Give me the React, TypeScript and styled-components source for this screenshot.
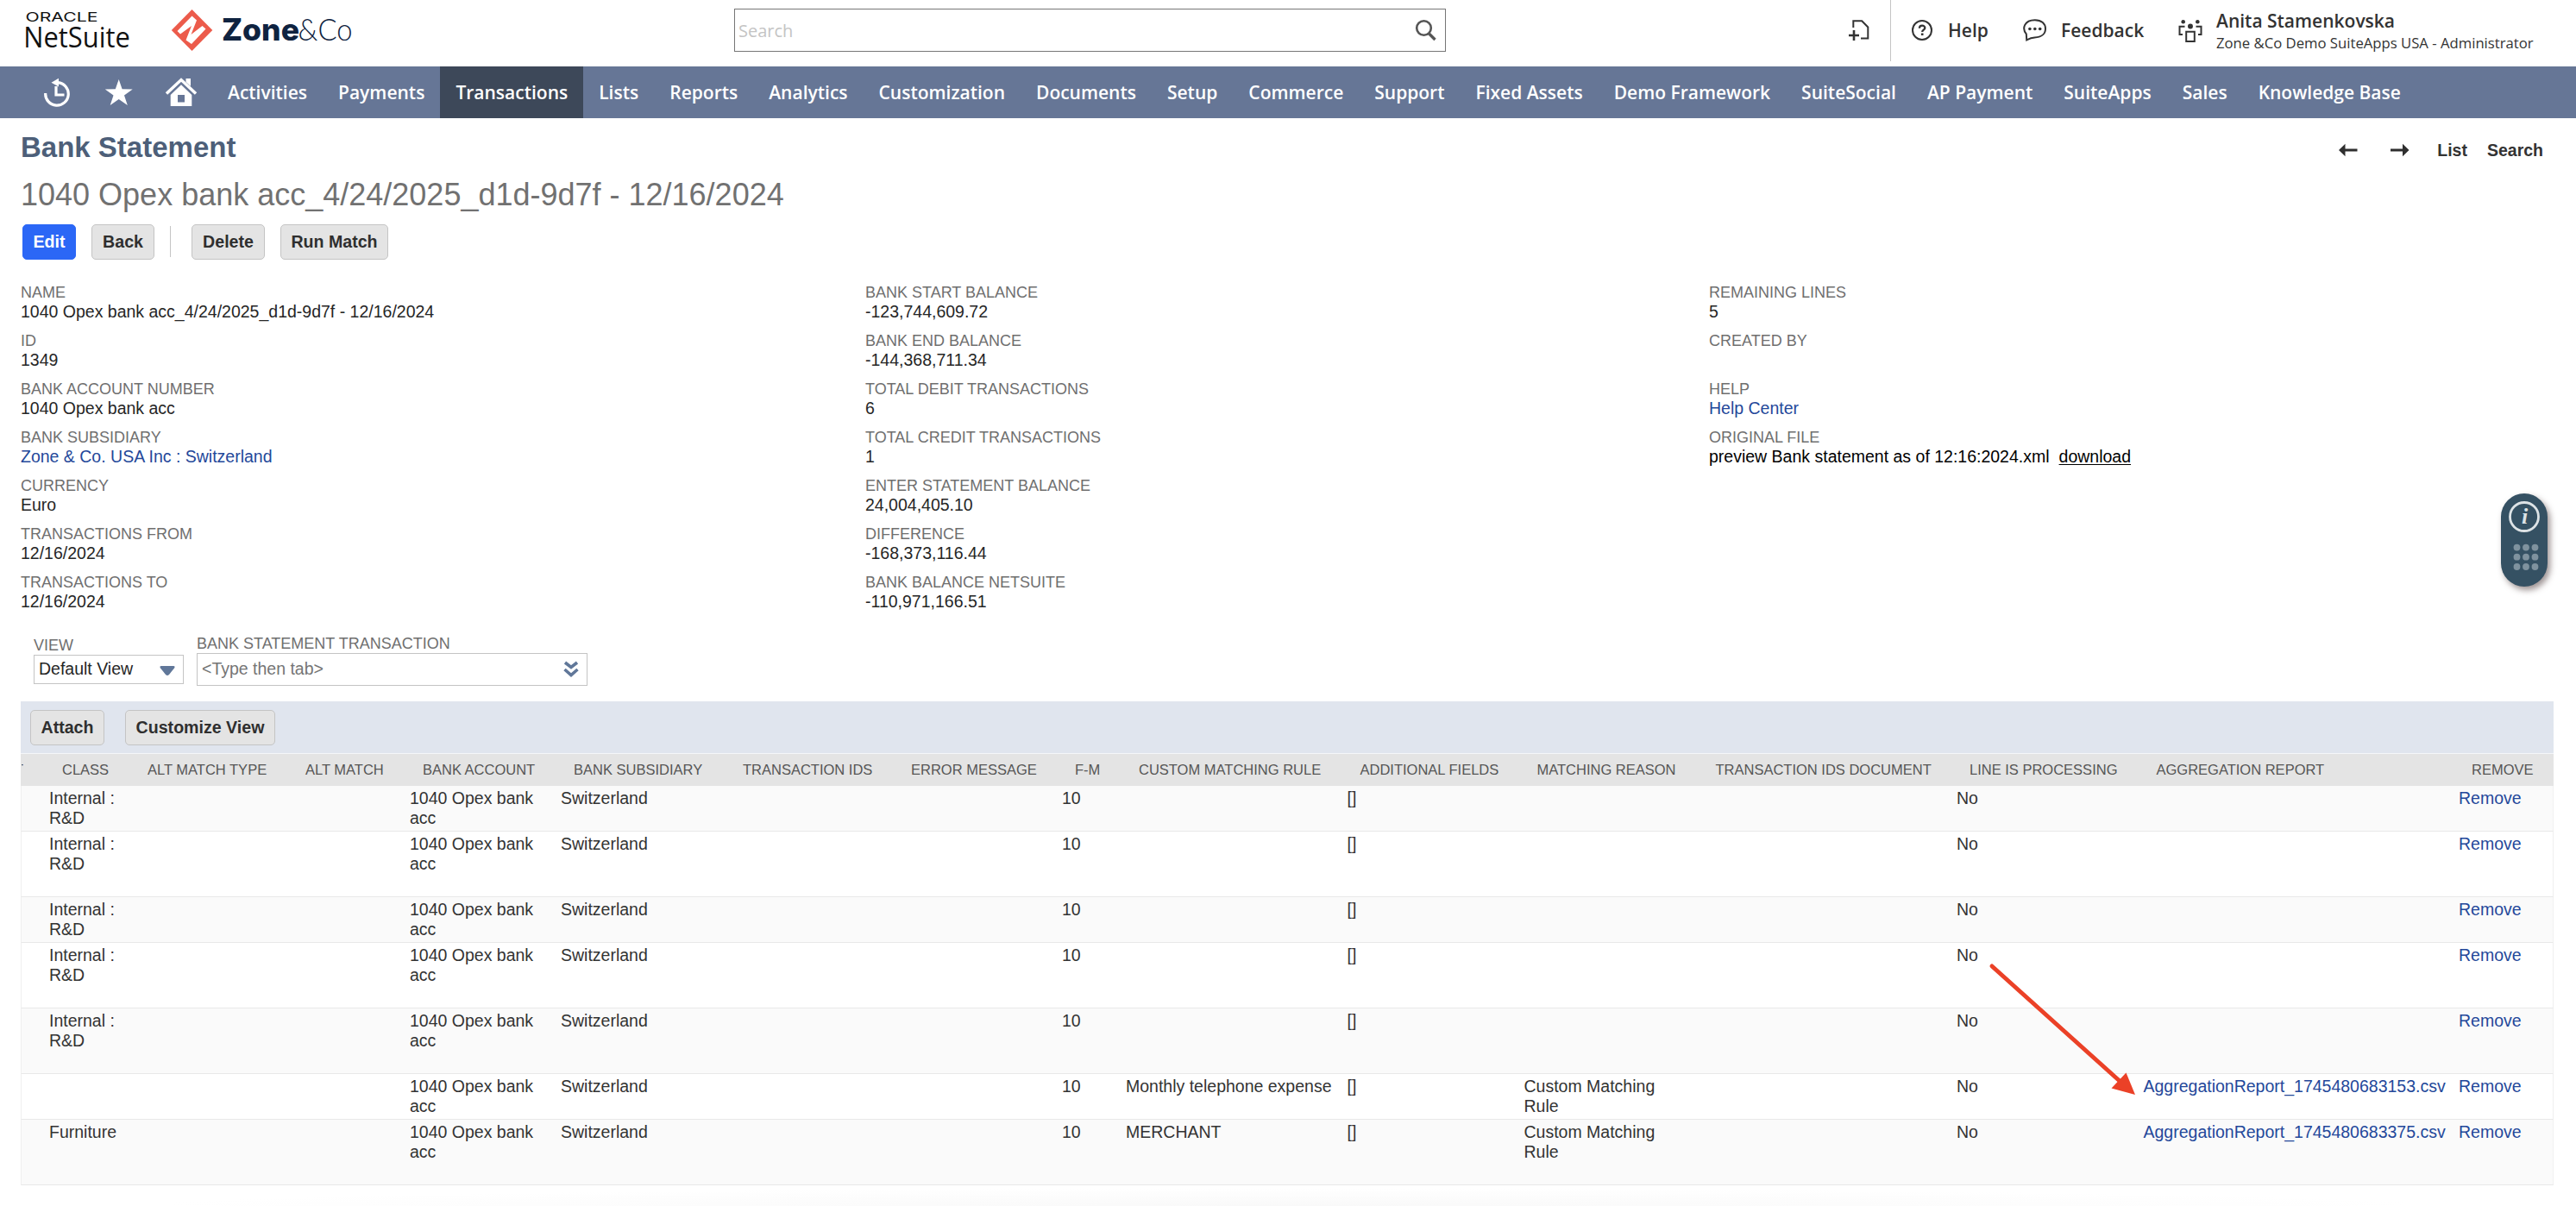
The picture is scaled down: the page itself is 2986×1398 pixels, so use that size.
import { FC } from "react";
import styled, { createGlobalStyle, css } from "styled-components";

const GlobalStyle = createGlobalStyle`
  * {
    box-sizing: border-box;
  }
  body {
    margin: 0;
    background: #ffffff;
    color: #333333;
    font-family: "Liberation Sans", Arial, sans-serif;
    font-size: 19.5px;
  }
`;

const openSans = css`
  font-family: "Open Sans", "Noto Sans", sans-serif;
`;
const flexAln = css`
  display: flex;
  align-items: center;
`;

const Page = styled.div`
  position: relative;
  width: 2986px;
  height: 1398px;
  overflow: hidden;
  display: flex;
  flex-direction: column;
`;

/* header */
const TopBar = styled.header`
  ${openSans}
  display: flex;
  height: 77px;
  flex: none;
`;
const LogoBox = styled.div`
  width: 851px;
  padding: 8px 0 0 28px;
  display: flex;
`;
const NetSuiteLogo = styled.svg`
  width: 126px;
  height: 56px;
  margin-right: 44px;
  overflow: visible;
`;
const ZoneLogo = styled.svg`
  width: 214px;
  height: 56px;
`;
const SearchBox = styled.div`
  ${flexAln}
  justify-content: space-between;
  width: 825px;
  height: 50px;
  margin: 10px 467px 0 0;
  padding: 0 10px 0 4px;
  border: 1px solid #767676;
  color: #c4c4c4;
  font-size: 20px;
`;
const NewCell = styled.div`
  width: 49px;
  height: 71px;
  padding-top: 22px;
  border-right: 1px solid #c4c4c4;
`;
const Tool = styled.div<{ $width: number; $gap: number }>`
  ${flexAln}
  width: ${props => props.$width}px;
  gap: ${props => props.$gap}px;
  height: 70px;
  color: #333333;
  font-size: 21px;
  font-weight: 600;
`;
const HelpTool = styled(Tool)`
  padding-left: 24px;
`;
const UserBox = styled.div`
  display: flex;
  gap: 16px;
  padding-top: 10px;
`;
const UserName = styled.div`
  font-size: 21px;
  font-weight: 600;
  line-height: 28px;
  white-space: nowrap;
`;
const UserRole = styled.div`
  font-size: 16.7px;
  line-height: 23px;
  white-space: nowrap;
`;

/* navigation */
const Nav = styled.nav`
  ${openSans}
  display: flex;
  flex: none;
  height: 60px;
  padding-left: 50px;
  background: #667696;
`;
const NavIcons = styled.div`
  display: flex;
  padding-top: 13px;
  width: 196px;
  gap: 38px;
`;
const NavItem = styled.div<{ $active: boolean }>`
  padding: 0 18px;
  line-height: 60px;
  font-size: 21px;
  font-weight: 600;
  color: #ffffff;
  white-space: nowrap;
  background: ${props => (props.$active ? "#3d4859" : "transparent")};
`;

/* page title */
const Main = styled.main`
  padding: 15px 26px 0 24px;
`;
const TitleRow = styled.div`
  display: flex;
  justify-content: space-between;
  height: 36px;
`;
const Title = styled.h1`
  margin: 0;
  font-size: 33px;
  line-height: 37px;
  color: #4d5f79;
`;
const PageLinks = styled.div`
  ${flexAln}
  height: 44px;
  padding-right: 12px;
  font-weight: bold;
  line-height: 23px;
`;
const PageArrow = styled.svg<{ $gap: number }>`
  width: 22px;
  height: 16px;
  margin-right: ${props => props.$gap}px;
`;
const PageLink = styled.span`
  margin-left: 23px;
  &:first-of-type {
    margin-left: 0;
  }
`;
const Subtitle = styled.h2`
  margin: 17px 0 13px;
  font-size: 36px;
  font-weight: normal;
  line-height: 42px;
  color: #717171;
`;
const Buttons = styled.div`
  display: flex;
  gap: 18px;
  padding-left: 2px;
`;
const Button = styled.button<{ $width: number; $primary?: boolean }>`
  width: ${props => props.$width}px;
  height: 41px;
  padding: 0;
  border: 1px solid ${props => (props.$primary ? "#2b67f6" : "#c4c4c4")};
  border-radius: 5px;
  background: ${props => (props.$primary ? "#2b67f6" : "#e4e4e4")};
  color: ${props => (props.$primary ? "#ffffff" : "#2f2f2f")};
  font: bold 19.6px/38px "Liberation Sans", Arial, sans-serif;
  padding-bottom: 1px;
  white-space: nowrap;
`;
const Divider = styled.div`
  width: 1px;
  height: 36px;
  margin: 2px 6px 0 0;
  background: #c4c4c4;
`;

/* fields */
const Fields = styled.div`
  display: grid;
  grid-template-columns: 979px 978px 1fr;
  margin-top: 27px;
`;
const Field = styled.div`
  height: 56px;
`;
const Label = styled.div`
  font-size: 18px;
  line-height: 22px;
  color: #6f6f6f;
  white-space: nowrap;
`;
const Value = styled.div`
  line-height: 23px;
  color: #262626;
`;
const Link = styled.span`
  color: #24489a;
`;
const FileText = styled.span`
  color: #000000;
`;
const Download = styled.a`
  margin-left: 11px;
  text-decoration: underline;
  text-underline-offset: 2px;
`;

/* filters */
const FilterRow = styled.div`
  display: flex;
  height: 60px;
  margin: 15px 0 18px 15px;
`;
const ViewFilter = styled.div`
  width: 174px;
  margin-right: 15px;
  padding-top: 2px;
`;
const TransactionFilter = styled.div`
  width: 453px;
`;
const Select = styled.div<{ $height: number }>`
  ${flexAln}
  justify-content: space-between;
  height: ${props => props.$height}px;
  padding: 0 9px 2px 5px;
  border: 1px solid #c4c4c4;
  color: #262626;
`;
const TypeSelect = styled(Select)`
  color: #757575;
`;
const SelectIcon = styled.svg`
  width: 18px;
  height: 20px;
  margin-top: 2px;
`;

/* transactions table */
const Toolbar = styled.div`
  display: flex;
  gap: 24px;
  height: 61px;
  padding: 10px 0 0 11px;
  background: #e0e5ee;
  border-bottom: 1px solid #f4f6f9;
`;
const columns = css`
  display: grid;
  grid-template-columns: 32px 99px 183px 136px 175px 196px 195px 190px 74px 256.5px 205px 207px 294.5px 216.5px 365.5px 1fr;
`;
const TableHead = styled.div`
  ${columns}
  height: 37px;
  padding-left: 1px;
  background: #e4e4e4;
  font-size: 16.5px;
  line-height: 37px;
  color: #565656;
`;
const HeadCell = styled.div`
  padding-left: 15px;
  white-space: nowrap;
`;
/* the column scrolled out on the left, only the end of its name is seen */
const CutCell = styled.div`
  display: flex;
  justify-content: flex-end;
  width: 2px;
  overflow: hidden;
`;
const Row = styled.div<{ $tall: boolean }>`
  ${columns}
  height: ${props => (props.$tall ? 76 : 53)}px;
  padding-top: 3px;
  border: 1px solid #e8e8e8;
  border-top: 0;
  border-left-color: #f0f0f0;
  border-right-color: #f0f0f0;
  background: #ffffff;

  &:nth-child(odd) {
    background: #fafafa;
  }
`;
const Cell = styled.div`
  padding-right: 14px;
  line-height: 23px;
`;
const LinkCell = styled(Cell)`
  color: #24489a;
  white-space: nowrap;
`;
const Footer = styled.div`
  flex: 1;
  margin: 4px 200px 0;
  background: radial-gradient(ellipse at bottom, #f9f9f9, #ffffff 72%);
`;

/* things that float above the page */
const Widget = styled.div`
  position: absolute;
  left: 2899px;
  top: 572px;
  width: 54px;
  height: 108px;
  border-radius: 27px;
  background: #355163;
  box-shadow: 3px 4px 7px rgba(60, 40, 40, 0.5);
`;
const Pointer = styled.svg`
  position: absolute;
  left: 2300px;
  top: 1110px;
  width: 180px;
  height: 165px;
`;

const navItems = [
  "Activities", "Payments", "Transactions", "Lists", "Reports", "Analytics", "Customization",
  "Documents", "Setup", "Commerce", "Support", "Fixed Assets", "Demo Framework", "SuiteSocial",
  "AP Payment", "SuiteApps", "Sales", "Knowledge Base",
];

const leftFields = [
  ["Name", "1040 Opex bank acc_4/24/2025_d1d-9d7f - 12/16/2024"],
  ["ID", "1349"],
  ["Bank Account Number", "1040 Opex bank acc"],
  ["Bank Subsidiary", "Zone & Co. USA Inc : Switzerland"],
  ["Currency", "Euro"],
  ["Transactions From", "12/16/2024"],
  ["Transactions To", "12/16/2024"],
];
const middleFields = [
  ["Bank Start Balance", "-123,744,609.72"],
  ["Bank End Balance", "-144,368,711.34"],
  ["Total Debit Transactions", "6"],
  ["Total Credit Transactions", "1"],
  ["Enter Statement Balance", "24,004,405.10"],
  ["Difference", "-168,373,116.44"],
  ["Bank Balance NetSuite", "-110,971,166.51"],
];
const rightFields = [
  ["Remaining Lines", "5"],
  ["Created By", ""],
  ["Help", "Help Center"],
  ["Original File", "preview Bank statement as of 12:16:2024.xml"],
];
const linkFields = ["Bank Subsidiary", "Help"];

const headings = [
  "Class", "Alt Match Type", "Alt Match", "Bank Account", "Bank Subsidiary", "Transaction IDs",
  "Error Message", "F-M", "Custom Matching Rule", "Additional Fields", "Matching Reason",
  "Transaction IDs Document", "Line Is Processing", "Aggregation Report", "Remove",
];

type Line = { cls: string; rule?: string; reason?: string; report?: string; tall: boolean };

const lines: Line[] = [
  { cls: "Internal : R&D", tall: false },
  { cls: "Internal : R&D", tall: true },
  { cls: "Internal : R&D", tall: false },
  { cls: "Internal : R&D", tall: true },
  { cls: "Internal : R&D", tall: true },
  {
    cls: "", rule: "Monthly telephone expense", reason: "Custom Matching Rule",
    report: "AggregationReport_1745480683153.csv", tall: false,
  },
  {
    cls: "Furniture", rule: "MERCHANT", reason: "Custom Matching Rule",
    report: "AggregationReport_1745480683375.csv", tall: true,
  },
];

const Logos: FC = () => (
  <LogoBox>
    <NetSuiteLogo viewBox="28 8 126 56">
      <text x="29.5" y="24.8" fontFamily="Inter" fontSize="15" textLength="84" lengthAdjust="spacingAndGlyphs" fill="#111">ORACLE</text>
      <text x="27.3" y="55" fontFamily="Open Sans" fontSize="33" textLength="123.5" lengthAdjust="spacingAndGlyphs" fill="#111">NetSuite</text>
    </NetSuiteLogo>
    <ZoneLogo viewBox="198 8 214 56">
      <path d="M222.5 11 246.3 35 222.5 59 198.8 35z" fill="#ec5b4b" />
      <path d="M205.5 36 222.5 18.5 228 23.5 221.5 40 234.5 30 238.5 33.5 222 51 215.5 46.5 222 30 209 39.5z" fill="#fff" />
      <text x="257" y="46.6" fontFamily="Inter" fontWeight="800" fontSize="35" textLength="90" lengthAdjust="spacingAndGlyphs" fill="#0f2340">Zone</text>
      <text x="345.5" y="46.6" fontFamily="Lato" fontWeight="300" fontSize="35" textLength="63" lengthAdjust="spacingAndGlyphs" fill="#0f2340">&amp;Co</text>
    </ZoneLogo>
  </LogoBox>
);

const Header: FC = () => (
  <TopBar>
    <Logos />
    <SearchBox>
      Search
      <svg width="25" height="26" viewBox="0 0 25 26" fill="none" stroke="#555" strokeWidth="2.6">
        <circle cx="10.5" cy="10.5" r="8.3" />
        <path d="M16.5 17 23.5 24" strokeWidth="3.4" />
      </svg>
    </SearchBox>
    <NewCell>
      <svg width="24" height="26" viewBox="0 0 24 26" fill="none" stroke="#333" strokeWidth="2">
        <path d="M5.3 10V2.2H15.2L22.3 9.5V22.5H14" />
        <path d="M0 19H12M6 13V25" strokeWidth="2.6" />
      </svg>
    </NewCell>
    <HelpTool $width={153} $gap={18}>
      <svg width="24" height="24" viewBox="0 0 24 24" fill="none" stroke="#333" strokeWidth="2">
        <circle cx="12" cy="12" r="11" />
        <path d="M8.9 9.8C8.9 5.6 15.3 5.8 15.3 9.3 15.3 11.6 12.2 11.7 12.2 14" strokeWidth="2.3" />
        <path d="M12.2 15.5V18" strokeWidth="2.6" />
      </svg>
      Help
    </HelpTool>
    <Tool $width={180} $gap={16}>
      <svg width="28" height="26" viewBox="0 0 28 26" fill="none" stroke="#333" strokeWidth="2">
        <path d="M4.2 24.3 3.8 17.3C-1.5 11 1.5 1.2 13.8 1.2 21.5 1.2 26 5.6 26 11.2 26 17.5 21 21.2 13.5 21.4 9.5 21.5 7 22.8 4.2 24.3z" />
        <g fill="#333" stroke="none">
          <circle cx="7.9" cy="11.5" r="1.8" />
          <circle cx="13.8" cy="11.5" r="1.8" />
          <circle cx="19.7" cy="11.5" r="1.8" />
        </g>
      </svg>
      Feedback
    </Tool>
    <UserBox>
      <svg width="28" height="40" viewBox="0 -12 28 40" fill="none" stroke="#333" strokeWidth="2">
        <g fill="#333" stroke="none">
          <circle cx="5.7" cy="3.2" r="2.3" />
          <circle cx="22.3" cy="3.2" r="2.3" />
          <circle cx="14" cy="8.5" r="3" />
        </g>
        <path d="M7.5 8.8H1.5V18H5M20.5 8.8H26.5V18H23" />
        <path d="M9.2 14.8H18.8V26H9.2z" />
      </svg>
      <div>
        <UserName>Anita Stamenkovska</UserName>
        <UserRole>Zone &amp;Co Demo SuiteApps USA - Administrator</UserRole>
      </div>
    </UserBox>
  </TopBar>
);

const NavBar: FC = () => (
  <Nav>
    <NavIcons>
      <svg width="33" height="34" viewBox="0 0 33 34" fill="none" stroke="#fff" strokeWidth="3.2">
        <path d="M2.7 18A13.3 13.3 0 1 0 17 5.6" />
        <path d="M9.5 5.8 18 .8V10.5z" fill="#fff" stroke="none" />
        <path d="M15 10V20H24.5" />
      </svg>
      <svg width="33" height="34" viewBox="0 0 33 34" fill="#fff">
        <path d="M16.7 2 20.6 13.2 32.7 13.4 23 20.6 26.8 32 16.7 25 6.7 32 10.5 20.6 .8 13.4 12.8 13.2z" />
      </svg>
      <svg width="36" height="34" viewBox="0 0 36 34" fill="#fff">
        <path d="M1 18.5 18 2.5 35 18.5" fill="none" stroke="#fff" strokeWidth="3.4" />
        <path d="M23.5 1H29V10L23.5 5z" />
        <path d="M18 8.2 30.3 20V33H5.7V20zM14 20V28.5H22V20z" fillRule="evenodd" />
      </svg>
    </NavIcons>
    {navItems.map(i => <NavItem key={i} $active={i === "Transactions"}>{i}</NavItem>)}
  </Nav>
);

const FieldColumn: FC<{ fields: string[][] }> = ({ fields }) => (
  <div>
    {fields.map(([label, value]) => (
      <Field key={label}>
        <Label>{label.toUpperCase()}</Label>
        <Value>
          {linkFields.includes(label) && <Link>{value}</Link>}
          {label === "Original File" && <FileText>{value}<Download>download</Download></FileText>}
          {!linkFields.includes(label) && label !== "Original File" && value}
        </Value>
      </Field>
    ))}
  </div>
);

const Filters: FC = () => (
  <FilterRow>
    <ViewFilter>
      <Label>VIEW</Label>
      <Select $height={34}>
        Default View
        <SelectIcon viewBox="0 0 18 20">
          <path d="M2 6H16Q18.5 6 17 8.5L11 16Q9 18 7 16L1 8.5Q-.5 6 2 6z" fill="#607799" />
        </SelectIcon>
      </Select>
    </ViewFilter>
    <TransactionFilter>
      <Label>BANK STATEMENT TRANSACTION</Label>
      <TypeSelect $height={38}>
        &lt;Type then tab&gt;
        <SelectIcon viewBox="0 0 18 20" fill="none" stroke="#607799" strokeWidth="3.6">
          <path d="M2 2 9 7.5 16 2M1.5 10 9 16.5 16.5 10" />
        </SelectIcon>
      </TypeSelect>
    </TransactionFilter>
  </FilterRow>
);

const Table: FC = () => (
  <div>
    <Toolbar>
      <Button $width={86}>Attach</Button>
      <Button $width={174}>Customize View</Button>
    </Toolbar>
    <TableHead>
      <CutCell>T</CutCell>
      {headings.map(h => <HeadCell key={h}>{h.toUpperCase()}</HeadCell>)}
    </TableHead>
    <div>
      {lines.map((l, n) => (
        <Row key={n} $tall={l.tall}>
          <Cell />
          <Cell>{l.cls}</Cell>
          <Cell />
          <Cell />
          <Cell>1040 Opex bank acc</Cell>
          <Cell>Switzerland</Cell>
          <Cell />
          <Cell />
          <Cell>10</Cell>
          <Cell>{l.rule}</Cell>
          <Cell>[]</Cell>
          <Cell>{l.reason}</Cell>
          <Cell />
          <Cell>No</Cell>
          <LinkCell>{l.report}</LinkCell>
          <LinkCell>Remove</LinkCell>
        </Row>
      ))}
    </div>
  </div>
);

const InfoWidget: FC = () => (
  <Widget>
    <svg width="54" height="108" viewBox="0 0 54 108">
      <circle cx="27" cy="27" r="16.5" fill="none" stroke="#dde3e6" strokeWidth="2.8" />
      <text x="27.5" y="35" textAnchor="middle" fontFamily="Liberation Serif" fontStyle="italic" fontWeight="bold" fontSize="26" fill="#dde3e6">i</text>
      {[62.6, 73.7, 85].map(y => [18.5, 29, 39.5].map(x => (
        <circle key={`${x}-${y}`} cx={x} cy={y} r="3.9" fill="#7f929e" />
      )))}
    </svg>
  </Widget>
);

const App: FC = () => (
  <Page>
    <GlobalStyle />
    <Header />
    <NavBar />
    <Main>
      <TitleRow>
        <Title>Bank Statement</Title>
        <PageLinks>
          <PageArrow $gap={38} viewBox="0 0 22 16">
            <path d="M0 8 7.5 .8V6.5H21.5V9.5H7.5V15.2z" fill="#2f2f2f" />
          </PageArrow>
          <PageArrow $gap={32} viewBox="0 0 22 16">
            <path d="M21.5 8 14 .8V6.5H0V9.5H14V15.2z" fill="#2f2f2f" />
          </PageArrow>
          <PageLink>List</PageLink>
          <PageLink>Search</PageLink>
        </PageLinks>
      </TitleRow>
      <Subtitle>1040 Opex bank acc_4/24/2025_d1d-9d7f - 12/16/2024</Subtitle>
      <Buttons>
        <Button $width={62} $primary>Edit</Button>
        <Button $width={73}>Back</Button>
        <Divider />
        <Button $width={85}>Delete</Button>
        <Button $width={125}>Run Match</Button>
      </Buttons>
      <Fields>
        <FieldColumn fields={leftFields} />
        <FieldColumn fields={middleFields} />
        <FieldColumn fields={rightFields} />
      </Fields>
      <Filters />
      <Table />
    </Main>
    <Footer />
    <InfoWidget />
    <Pointer viewBox="2300 1110 180 165">
      <path d="M2309 1120 2458 1254" stroke="#eb4127" strokeWidth="5" strokeLinecap="round" />
      <path d="M2475 1269 2464.5 1243.5 2447.5 1261.5z" fill="#eb4127" />
    </Pointer>
  </Page>
);

export default App;
